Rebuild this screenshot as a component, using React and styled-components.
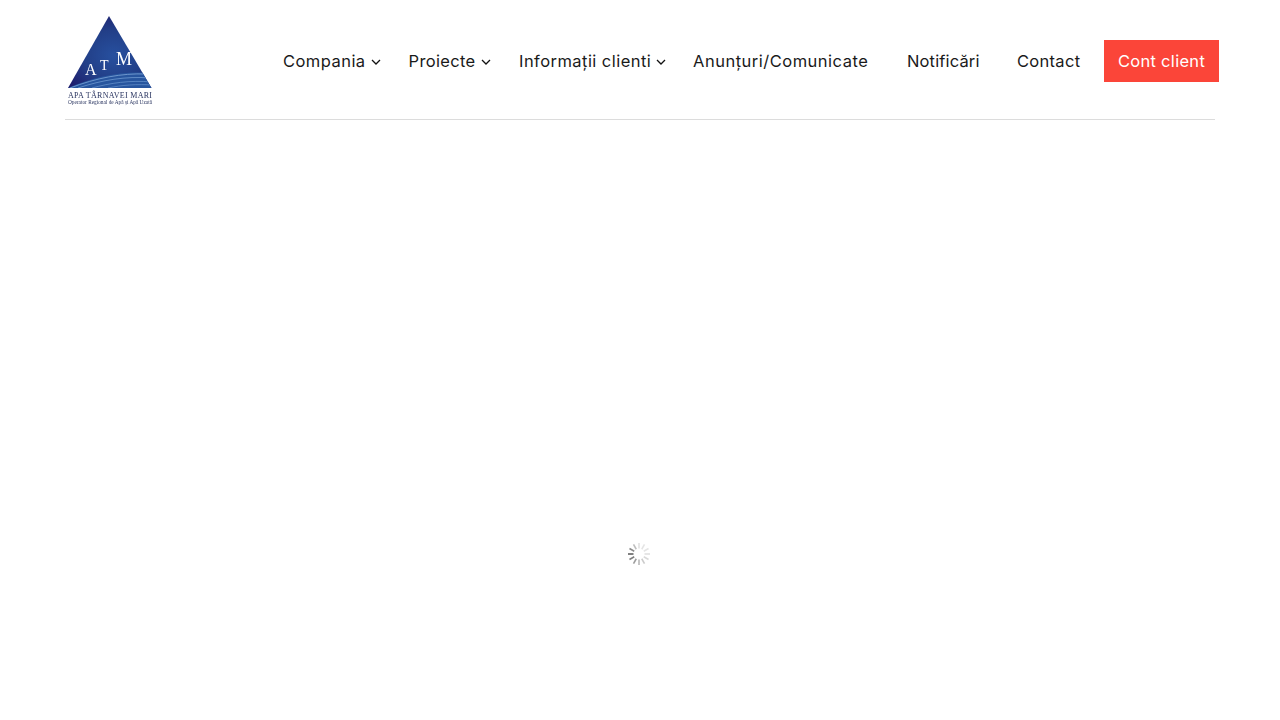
import React from 'react';
import styled, { createGlobalStyle } from 'styled-components';

const GlobalStyle = createGlobalStyle`
  html, body {
    margin: 0;
    padding: 0;
    background: #fff;
    font-family: "Inter", "Liberation Sans", sans-serif;
  }
`;

const Logo = () => (
  <LogoSvg viewBox="0 0 90 94" width="90" height="94">
    <defs>
      <radialGradient id="tri" cx="0.55" cy="0.55" r="0.7">
        <stop offset="0" stopColor="#27509f" />
        <stop offset="0.5" stopColor="#223f88" />
        <stop offset="1" stopColor="#1e1768" />
      </radialGradient>
      <clipPath id="triClip">
        <polygon points="43,3 85.5,75 2,75" />
      </clipPath>
    </defs>
    <polygon points="43,3 85.5,75 2,75" fill="url(#tri)" />
    <g clipPath="url(#triClip)" fill="none">
      <path d="M2 75 C28 64 56 58 82 60 L88 75 Z" fill="#27559e" />
      <path d="M4 75 C30 65 56 60 80 61" stroke="#7fa6d8" strokeWidth="0.8" />
      <path d="M12 75 C36 67 60 63 84 65" stroke="#6f99d0" strokeWidth="0.8" />
      <path d="M26 75 C44 70 64 67 86 69" stroke="#6590ca" strokeWidth="0.8" />
      <path d="M42 75 C56 72 70 71 88 72" stroke="#5f8cc6" strokeWidth="0.8" />
    </g>
    <LogoLetter x="19" y="62" fontSize="16">A</LogoLetter>
    <LogoLetter x="34" y="57" fontSize="14">T</LogoLetter>
    <LogoLetter x="50" y="52" fontSize="18">M</LogoLetter>
    <LogoTitle x="44" y="85" fontSize="8" textLength="84">APA TÂRNAVEI MARI</LogoTitle>
    <LogoTitle x="44" y="91" fontSize="5.6" textLength="84" lengthAdjust="spacingAndGlyphs">Operator Regional de Apă și Apă Uzată</LogoTitle>
  </LogoSvg>
);

const Chevron = () => (
  <ChevronSvg viewBox="0 0 10 6" width="10" height="6">
    <path d="M1 1l4 4 4-4" fill="none" stroke="#111" strokeWidth="1.3" />
  </ChevronSvg>
);

const Spinner = () => (
  <svg viewBox="0 0 24 24" width="24" height="24">
    {Array.from({ length: 12 }).map((_, i) => (
      <line
        key={i}
        x1="12"
        y1="1"
        x2="12"
        y2="6.5"
        stroke="#000"
        strokeWidth="1.6"
        opacity={[0.12, 0.1, 0.1, 0.12, 0.15, 0.2, 0.28, 0.38, 0.5, 0.62, 0.45, 0.25][i]}
        transform={`rotate(${i * 30} 12 12)`}
      />
    ))}
  </svg>
);

const navItems = [
  { label: 'Compania', width: 82, after: 27.5, spacing: 0.45, dropdown: true },
  { label: 'Proiecte', width: 66, after: 28.5, spacing: 0.35, dropdown: true },
  { label: 'Informații clienti', width: 131, after: 27, spacing: 0.45, dropdown: true },
  { label: 'Anunțuri/Comunicate', width: 175, after: 39, spacing: 0.5 },
  { label: 'Notificări', width: 73, after: 37, spacing: 0.15 },
  { label: 'Contact', width: 63, after: 24, spacing: 0.3 },
];

export default function App() {
  return (
    <>
      <GlobalStyle />
      <Page>
        <Header>
          <Logo />
          <Nav>
            {navItems.map((item) => (
              <NavItem key={item.label} $after={item.after} $spacing={item.spacing}>
                <NavLabel $width={item.width}>{item.label}</NavLabel>
                {item.dropdown && <Chevron />}
              </NavItem>
            ))}
            <ClientButton>Cont client</ClientButton>
          </Nav>
        </Header>
        <Loader>
          <Spinner />
        </Loader>
      </Page>
    </>
  );
}

const Page = styled.div`
  width: 1280px;
  height: 720px;
  overflow: hidden;
  background: #fff;
`;

const Header = styled.header`
  box-sizing: border-box;
  width: 1150px;
  height: 120px;
  margin-left: 65px;
  padding: 13px 0 0 1px;
  display: flex;
  align-items: flex-start;
  border-bottom: 1px solid #dcdcdc;
`;

const LogoSvg = styled.svg`
  flex: none;
  display: block;
  filter: blur(0.3px);
`;

const LogoLetter = styled.text`
  fill: #fff;
  font-family: "Liberation Serif", serif;
`;

const LogoTitle = styled.text`
  fill: #2a3560;
  text-anchor: middle;
  font-family: "Liberation Serif", serif;
`;

const Nav = styled.nav`
  display: flex;
  align-items: center;
  height: 42px;
  margin: 27px -4px 0 127px;
`;

const NavItem = styled.a`
  display: flex;
  align-items: center;
  margin-right: ${(p) => p.$after}px;
  color: #1a1a1a;
  font-size: 16.5px;
  letter-spacing: ${(p) => p.$spacing}px;
  line-height: 20px;
  white-space: nowrap;
`;

const NavLabel = styled.span`
  display: block;
  width: ${(p) => p.$width}px;
`;

const ChevronSvg = styled.svg`
  flex: none;
  margin: 1px 0 0 6px;
`;

const ClientButton = styled.a`
  box-sizing: border-box;
  display: flex;
  align-items: center;
  justify-content: center;
  width: 115px;
  height: 42px;
  background: #fb4539;
  color: #fff;
  font-size: 16.5px;
  letter-spacing: 0.3px;
  white-space: nowrap;
`;

const Loader = styled.main`
  display: flex;
  justify-content: center;
  padding: 422px 2px 0 0;
`;
